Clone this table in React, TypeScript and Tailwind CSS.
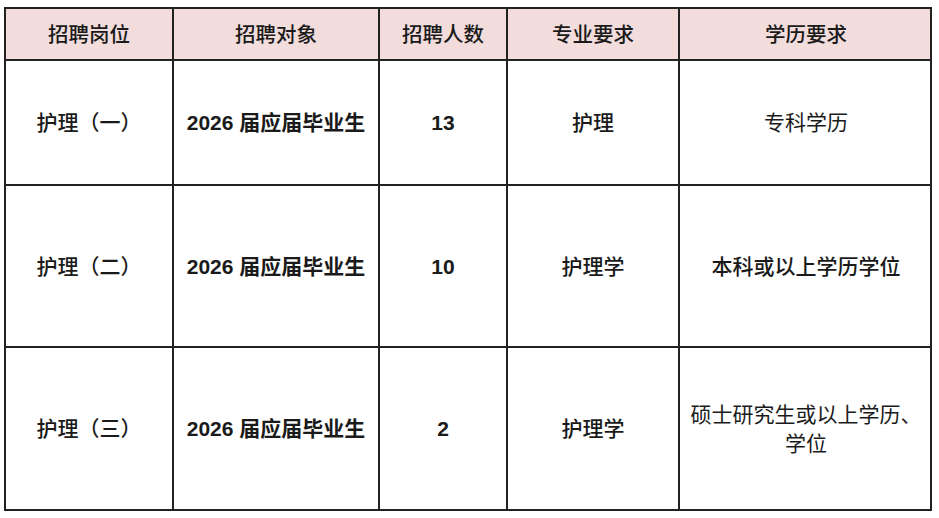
import React from "react";

const rows = [
  { post: "护理（一）", target: "2026 届应届毕业生", count: "13", major: "护理", edu: ["专科学历"], h: "h-[125px]", eduCls: "font-normal" },
  { post: "护理（二）", target: "2026 届应届毕业生", count: "10", major: "护理学", edu: ["本科或以上学历学位"], h: "h-[162px]", eduCls: "font-medium" },
  { post: "护理（三）", target: "2026 届应届毕业生", count: "2", major: "护理学", edu: ["硕士研究生或以上学历、", "学位"], h: "h-[161px]", eduCls: "font-normal" },
];

const headers = ["招聘岗位", "招聘对象", "招聘人数", "专业要求", "学历要求"];

const cols = "grid grid-cols-[168px_206px_128px_172px_252px]";
const cell = "flex flex-col items-center justify-center text-center border-r-2 border-[#222] last:border-r-0";

export default function App() {
  return (
    <div className="w-[939px] h-[518px] bg-white pt-[7px] pl-[4px] font-['Liberation_Sans','Noto_Sans_CJK_SC',sans-serif] text-[21px] leading-[29px] text-[#1a1a1a]">
      <div className="w-[928px] border-2 border-[#222]">
        <div className={`${cols} h-[52px] bg-[#f2dcdc] border-b-2 border-[#222] text-[20.5px]`}>
          {headers.map((h) => (
            <div key={h} className={`${cell} font-medium`}>
              {h}
            </div>
          ))}
        </div>
        {rows.map((r, i) => (
          <div key={r.post} className={`${cols} ${r.h} ${i < rows.length - 1 ? "border-b-2 border-[#222]" : ""}`}>
            <div className={`${cell} font-medium`}>{r.post}</div>
            <div className={`${cell} font-bold`}>{r.target}</div>
            <div className={`${cell} font-bold`}>{r.count}</div>
            <div className={`${cell} font-medium`}>{r.major}</div>
            <div className={`${cell} ${r.eduCls}`}>
              {r.edu.map((l) => (
                <div key={l}>{l}</div>
              ))}
            </div>
          </div>
        ))}
      </div>
    </div>
  );
}
